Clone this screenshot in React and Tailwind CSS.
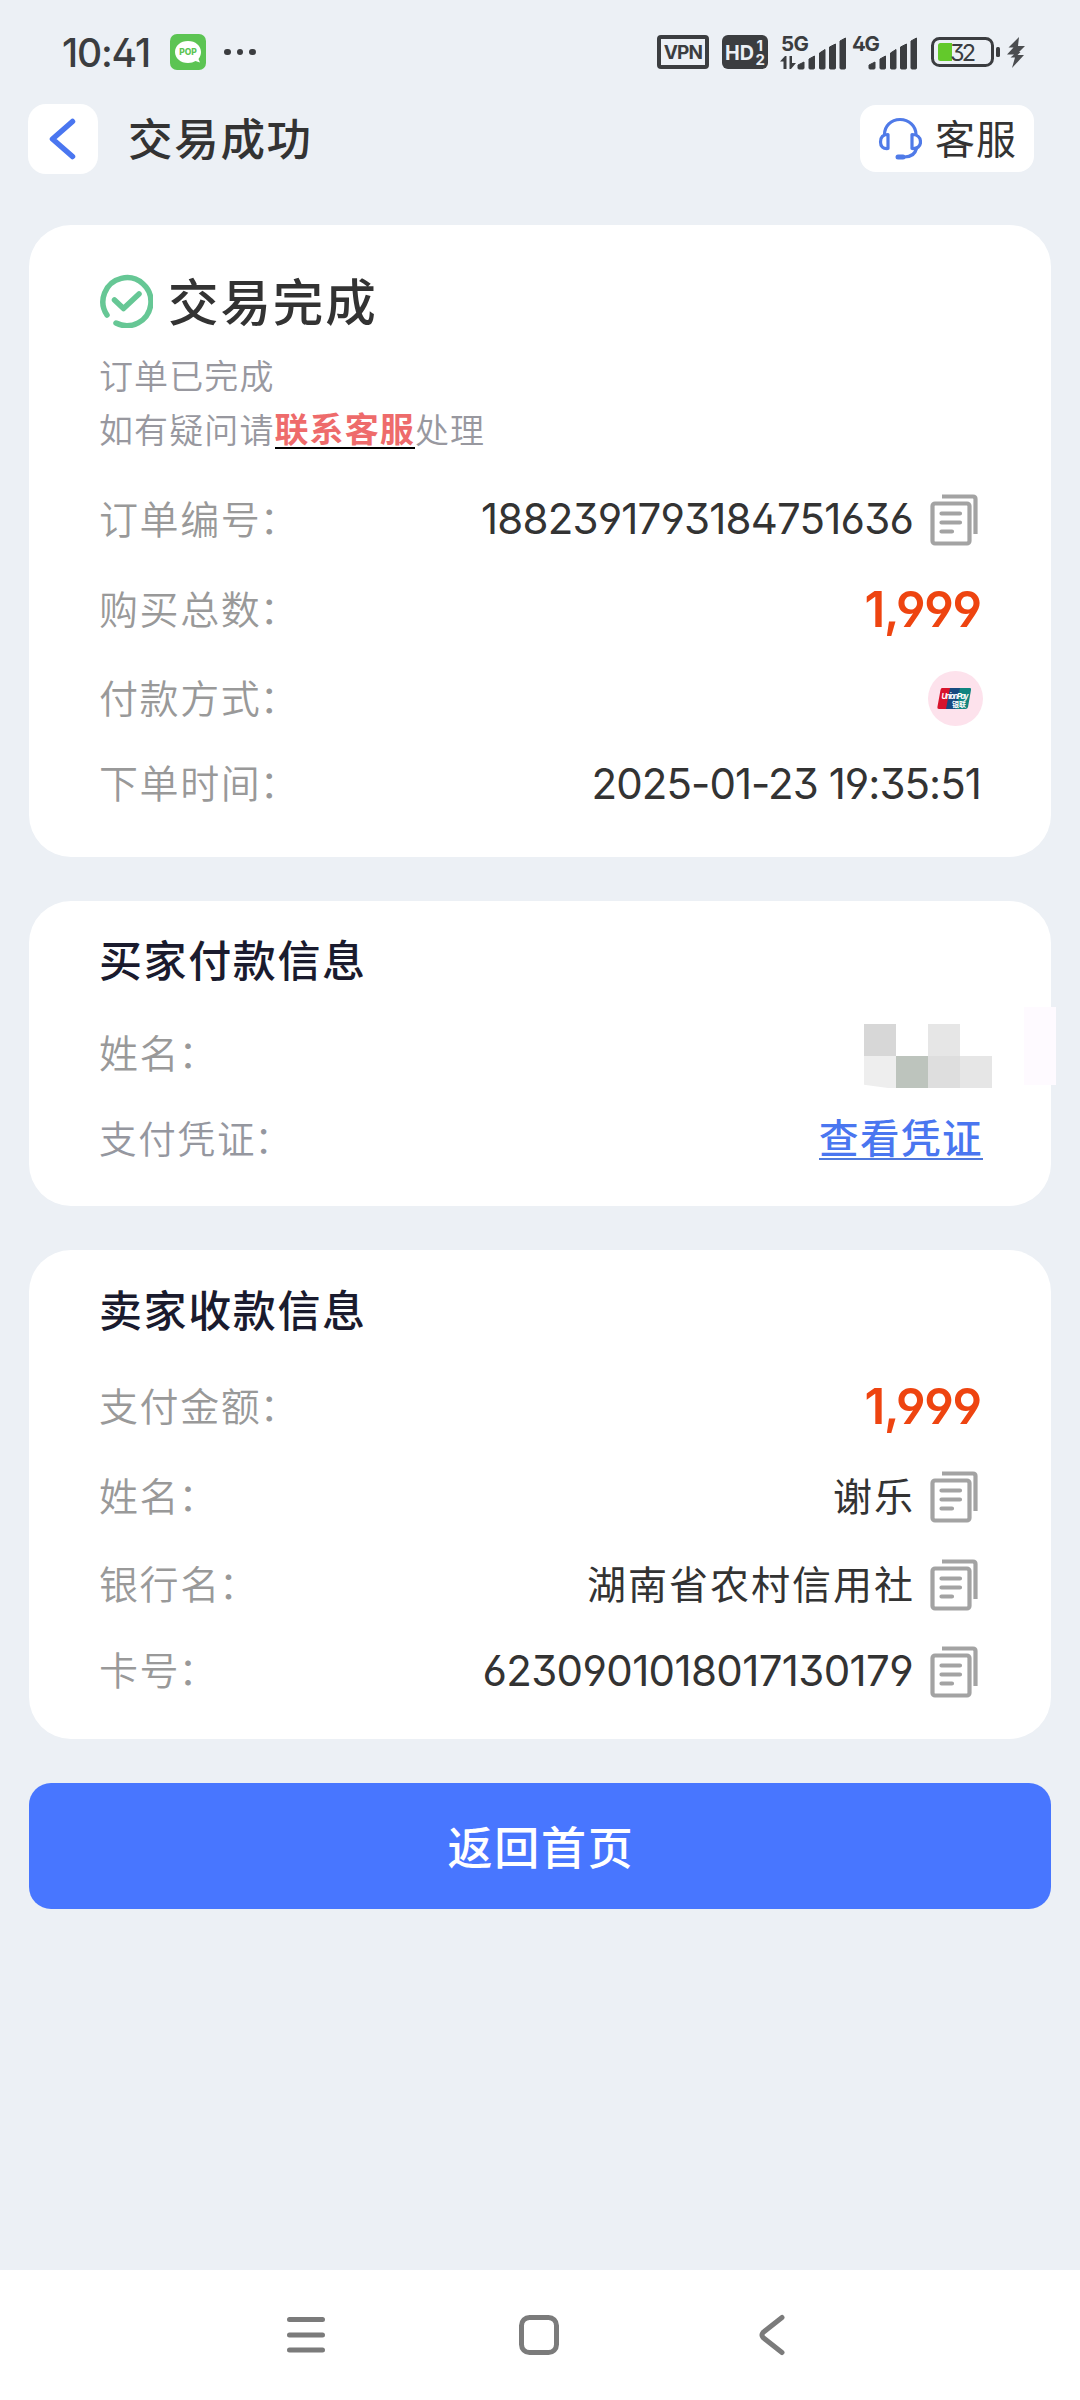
import React from "react";

const num = "font-['Inter',sans-serif] [font-feature-settings:'ss01','cv03','cv04']";

function CopyIcon() {
  return (
    <svg className="ml-[18px] mr-[3px] mt-[2px] h-[52px] w-[48px] shrink-0" viewBox="0 0 48 52" fill="none" stroke="#a3a3a3" strokeWidth="4.200" strokeLinecap="round" strokeLinejoin="round">
      <rect x="2.5" y="9.5" width="37" height="40" rx="2.500" />
      <path d="M12 2.500H43Q45.500 2.500 45.500 5V40" strokeLinecap="butt" />
      <path d="M11.500 19.500H30M11.500 28.500H30M11.500 37.500H22" />
    </svg>
  );
}

function Row({ label, className, labelClass = "text-[39px] tracking-[1.600px] text-[#999999]", children }) {
  return (
    <div className={"flex items-center justify-between " + className}>
      <span className={"pb-[4px] leading-none font-[350] " + labelClass}>
        {label}
        <span className="-ml-[2px]">：</span>
      </span>
      <div className="flex items-center">{children}</div>
    </div>
  );
}

function Card({ className, children }) {
  return <section className={"rounded-[42px] bg-white px-[70px] " + className}>{children}</section>;
}

function CardTitle({ children }) {
  return <h2 className="flex h-[60px] items-center pb-[3px] text-[43px] font-medium leading-none tracking-[1.600px] text-[#1a1b2e]">{children}</h2>;
}

function Amount() {
  return <span className={num + " text-[49px] font-semibold leading-none tracking-[-1.200px] text-[#ee4410]"}>1,999</span>;
}

function Signal({ label, data, className }) {
  return (
    <svg className={"h-[38px] overflow-visible " + className} viewBox="0 -2 68 38" fill="#3b3d40">
      <text x="-1" y="15.500" fontSize="20.500" fontWeight="700" textLength="28" fontFamily="Inter, sans-serif">{label}</text>
      {data && <path d="M-2 26.500l5-5.500h1.500v13h-3v-7.500zM7.500 21h2.500v7h4l-5 6h-1.500z" />}
      <path d="M16 33v-3l6-3v6q0 1-1 1h-4q-1 0-1-1z M27 33V24l5.500-3V33q0 1-1 1h-3.500q-1 0-1-1z M37.500 33V18l5.500-3.500V33q0 1-1 1h-3.500q-1 0-1-1z M47.500 33V12l6-3V33q0 1-1 1h-4q-1 0-1-1z M58 33V6l5.500-3V33q0 1-1 1h-3.500q-1 0-1-1z" stroke="#3b3d40" strokeWidth="1" strokeLinejoin="round" />
    </svg>
  );
}

function StatusBar() {
  return (
    <div className="flex h-[104px] items-center pl-[62px] pr-[53px]">
      <span className={num + " w-[108px] text-[39px] font-medium leading-none tracking-[-1.200px] text-[#3b3d40]"}>10:41</span>
      <svg className="h-[36px] w-[36px]" viewBox="0 0 36 36">
        <rect width="36" height="36" rx="7" fill="#5cc453" />
        <path d="M18 7C10.500 7 5 11.800 5 18s5.500 11 13 11c3 0 5.500-.7 7.500-2l4.500 1.500-1.500-3.500c1.500-2 2.500-4.300 2.500-7C31 11.800 25.500 7 18 7z" fill="#fff" />
        <text x="18" y="21.200" textAnchor="middle" fontSize="8.500" fontWeight="800" fontFamily="Inter, sans-serif" fill="#5cc453">POP</text>
      </svg>
      <div className="ml-[18px] flex gap-[6px]">
        <i className="size-[6.500px] rounded-full bg-[#3b3d40]" />
        <i className="size-[6.500px] rounded-full bg-[#3b3d40]" />
        <i className="size-[6.500px] rounded-full bg-[#3b3d40]" />
      </div>
      <div className={num + " ml-auto flex items-center text-[#3b3d40]"}>
        <div className="flex h-[34px] w-[52px] items-center justify-center rounded-[4px] border-4 border-[#3b3d40] text-[19px] font-bold leading-none tracking-[-0.800px]">VPN</div>
        <svg className="ml-[13px] h-[34px] w-[46px]" viewBox="0 0 46 34">
          <rect width="46" height="34" rx="6" fill="#3b3d40" />
          <g fill="#ecf0f5" fontFamily="Inter, sans-serif" fontWeight="700">
            <text x="3" y="24.500" fontSize="20.500" textLength="29" lengthAdjust="spacingAndGlyphs">HD</text>
            <text x="34.500" y="15.500" fontSize="15">1</text>
            <text x="33.500" y="30" fontSize="15">2</text>
          </g>
        </svg>
        <Signal label="5G" data className="ml-[14px] w-[68px]" />
        <Signal label="4G" className="ml-[3px] w-[68px]" />
        <svg className="ml-[10px] h-[32px] w-[96px] overflow-visible" viewBox="0 0 96 32">
          <rect x="1.500" y="2.500" width="60" height="27" rx="7" fill="none" stroke="#3b3d40" strokeWidth="3" />
          <path d="M9.500 7H21v18H9.500Q7 25 7 22.500V9.500Q7 7 9.500 7z" fill="#63c92b" />
          <text x="19" y="24.500" fontSize="23.500" textLength="26" fontFamily="Inter, sans-serif" fill="#3b3d40">32</text>
          <rect x="65" y="11" width="4" height="10" rx="1.500" fill="#3b3d40" />
          <path d="M88 1L77.500 11.500h5L76 18.500h7l-3.500 3H84L81 32l12-13h-6.500l3-3H88l6-6h-7z" fill="#4b4d50" />
        </svg>
      </div>
    </div>
  );
}

export default function App() {
  return (
    <div className="flex h-[2400px] w-[1080px] flex-col bg-[#ecf0f5] font-['Noto_Sans_CJK_SC',sans-serif] text-[#333333]">
      <StatusBar />

      <header className="flex h-[69px] items-center pl-[28px] pr-[46px]">
        <button className="flex size-[70px] items-center justify-center rounded-[18px] bg-white">
          <svg className="h-[42px] w-[28px]" viewBox="0 0 28 42" fill="none" stroke="#4a76f0" strokeWidth="5.500" strokeLinecap="round" strokeLinejoin="round">
            <path d="M23.500 3.500L3.500 21L23.500 38.500" />
          </svg>
        </button>
        <h1 className="ml-[30px] pb-[3px] text-[44.500px] font-medium leading-none tracking-[1.700px]">交易成功</h1>
        <button className="ml-auto flex h-[67px] w-[174px] items-center rounded-[16px] bg-white pl-[18px]">
          <svg className="h-[44px] w-[44px]" viewBox="0 0 44 44" fill="none" stroke="#4f7ae8" strokeWidth="3.200" strokeLinecap="round" strokeLinejoin="round">
            <path d="M6.500 17.500C6.500 9 13 2.500 22 2.500S38 9 38 17.500" />
            <path d="M10 17.500C5 17.500 2.500 20.500 2.500 25S5 32 10 31.500zM34 17.500c5 0 8.500 3 8.500 7.500S39 32 34 31.500z" />
            <path d="M38.500 31.500C37 37.500 33 40 26.500 40" />
            <path d="M20 40h5" strokeWidth="5" />
          </svg>
          <span className="ml-[13px] pb-[4px] text-[40px] leading-none tracking-[1px]">客服</span>
        </button>
      </header>

      <main className="flex grow flex-col px-[29px] pt-[52px]">
        <Card className="h-[632px] pt-[46px]">
          <div className="flex h-[60px] items-center">
            <svg className="size-[54px]" viewBox="0 0 54 54" fill="none" stroke="#66c795" strokeWidth="5.500" strokeLinecap="round" strokeLinejoin="round">
              <path d="M8 41A24 24 0 1 1 17 49" />
              <path d="M15.500 26L24.500 34.500L40 20" />
            </svg>
            <span className="ml-[15px] pb-[4px] text-[50.500px] font-medium leading-none tracking-[1.900px]">交易完成</span>
          </div>
          <div className="mt-[17px] h-[126px] text-[34px] font-[350] leading-[54px] tracking-[1.100px] text-[#98989f]">
            <p>订单已完成</p>
            <p className="flex items-center">
              如有疑问请
              <a className="h-[40px] border-b-2 border-black font-bold leading-[38px] text-[#ee6b6b]">联系客服</a>
              处理
            </p>
          </div>
          <Row label="订单编号" className="h-[90px]">
            <span className={num + " -mr-px text-[42px] leading-none tracking-[-0.820px]"}>1882391793184751636</span>
            <CopyIcon />
          </Row>
          <Row label="购买总数" className="h-[90px]">
            <Amount />
          </Row>
          <Row label="付款方式" className="h-[88px]">
            <svg className="-mr-[2px] size-[55px]" viewBox="0 0 55 55">
              <circle cx="27.500" cy="27.500" r="27.500" fill="#fde2ec" />
              <path d="M14 17h9l-4 21h-8q-2 0-1.500-2.500l3-16.500Q13 17 14 17z" fill="#d8142c" />
              <path d="M22 17h11l-4 21H18z" fill="#174a80" />
              <path d="M32 17h10q1.500 0 1 2l-3 17q-.5 2-2.500 2H28z" fill="#108580" />
              <text x="13.500" y="28" fontSize="7.500" fontWeight="700" fontStyle="italic" textLength="27" fill="#fff" fontFamily="Inter, sans-serif">UnionPay</text>
              <text x="24" y="35.500" fontSize="7" fontWeight="700" textLength="14" fill="#fff" fontFamily="Noto Sans CJK SC, sans-serif">银联</text>
            </svg>
          </Row>
          <Row label="下单时间" className="h-[83px]">
            <span className={num + " text-[42px] leading-none tracking-[-0.950px]"}>2025-01-23 19:35:51</span>
          </Row>
        </Card>

        <Card className="relative mt-[44px] h-[305px] pt-[29px]">
          <CardTitle>买家付款信息</CardTitle>
          <Row label="姓名" className="mt-[20px] h-[86px]">
            <div className="-mr-[11px] mt-[6px] grid grid-cols-4">
              <i className="size-8 bg-[#d7d7d7]" />
              <i className="size-8" />
              <i className="size-8 bg-[#e6e6e6]" />
              <i className="size-8" />
              <i className="size-8 bg-[#eeeeee] [clip-path:polygon(0_0,100%_0,100%_100%,75%_100%,0_90%)]" />
              <i className="size-8 bg-[#bdc4bd]" />
              <i className="size-8 bg-[#dedede]" />
              <i className="size-8 bg-[#e6e6e6]" />
            </div>
          </Row>
          <Row label="支付凭证" labelClass="text-[37.500px] tracking-[1.800px] text-[#95979f]" className="h-[85px]">
            <a className="-mr-[2px] h-[42px] border-b-2 border-[#4f78dc] text-[39.500px] font-medium leading-[36px] tracking-[1.500px] text-[#4a76f0]">查看凭证</a>
          </Row>
          <div className="absolute -right-[5px] top-[106px] h-[78px] w-[32px] bg-[#fefaff]" />
        </Card>

        <Card className="mt-[44px] h-[489px] pt-[30px]">
          <CardTitle>卖家收款信息</CardTitle>
          <Row label="支付金额" className="mt-[21px] h-[90px]">
            <Amount />
          </Row>
          <Row label="姓名" className="h-[90px]">
            <span className="-mr-[3px] pb-[4px] text-[39px] leading-none tracking-[2px]">谢乐</span>
            <CopyIcon />
          </Row>
          <Row label="银行名" className="h-[86px]">
            <span className="-mr-[3px] pb-[4px] text-[39px] leading-none tracking-[2px]">湖南省农村信用社</span>
            <CopyIcon />
          </Row>
          <Row label="卡号" className="h-[87px]">
            <span className={num + " -mr-px text-[42px] leading-none tracking-[-0.620px]"}>6230901018017130179</span>
            <CopyIcon />
          </Row>
        </Card>

        <button className="mt-[44px] h-[126px] rounded-[22px] bg-[#4876ff] pb-[2px] pl-[2px] text-[45px] font-medium leading-none tracking-[1.700px] text-white">返回首页</button>
      </main>

      <nav className="flex h-[130px] items-center bg-white pl-[286px]">
        <svg className="h-[40px] w-[40px]" viewBox="0 0 40 40" stroke="#7b7b7b" strokeWidth="5" strokeLinecap="round">
          <path d="M3.500 4.500H36.500M3.500 20H36.500M3.500 35H36.500" />
        </svg>
        <svg className="ml-[192px] h-[42px] w-[42px]" viewBox="0 0 42 42" fill="none" stroke="#7b7b7b" strokeWidth="5">
          <rect x="3.500" y="3.500" width="35" height="35" rx="8" />
        </svg>
        <svg className="ml-[198px] h-[42px] w-[28px]" viewBox="0 0 28 42" fill="none" stroke="#7b7b7b" strokeWidth="5" strokeLinecap="round" strokeLinejoin="round">
          <path d="M24 3.500L5 18.500Q3 21 5 23.500L24 38.500" />
        </svg>
      </nav>
    </div>
  );
}
